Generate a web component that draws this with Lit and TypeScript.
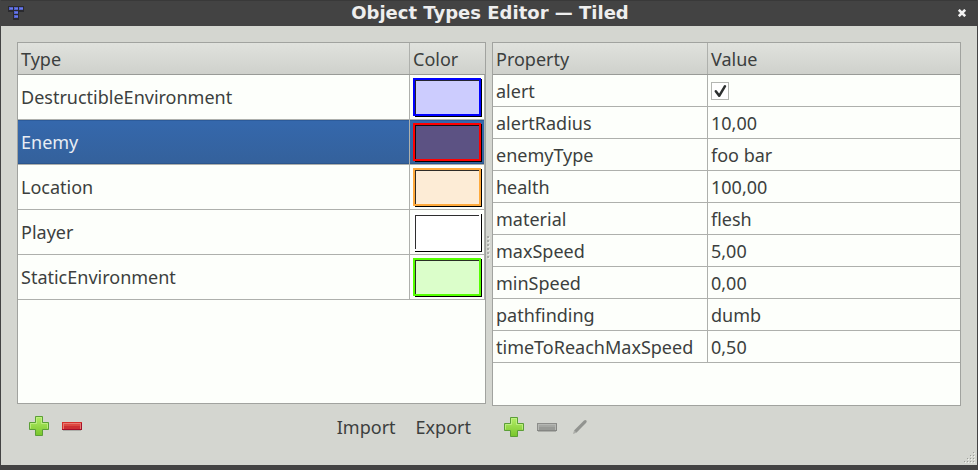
import { LitElement, html, svg, css } from "lit";
import { customElement } from "lit/decorators.js";
import { classMap } from "lit/directives/class-map.js";

const types = [
  { name: "DestructibleEnvironment", stroke: "#0000ff", fill: "#ccccfe" },
  { name: "Enemy", stroke: "#ff0000", fill: "#5c5283", selected: true },
  { name: "Location", stroke: "#ffaa3c", fill: "#fdecd6" },
  { name: "Player", stroke: "#ffffff", fill: "#ffffff" },
  { name: "StaticEnvironment", stroke: "#55ff00", fill: "#dbfeca" },
];

const properties: [string, string | boolean][] = [
  ["alert", true],
  ["alertRadius", "10,00"],
  ["enemyType", "foo bar"],
  ["health", "100,00"],
  ["material", "flesh"],
  ["maxSpeed", "5,00"],
  ["minSpeed", "0,00"],
  ["pathfinding", "dumb"],
  ["timeToReachMaxSpeed", "0,50"],
];

const swatch = (stroke: string, fill: string) => html`
  <svg class="swatch" width="70" height="40" viewBox="0 0 70 40" shape-rendering="crispEdges">
    <rect x="2" y="2" width="65" height="35" fill=${fill} />
    <path d="M68 1h1v38h-67v-1h66z" fill="#000" />
    <rect x="1" y="1" width="66" height="36" fill="none" stroke=${stroke} stroke-width="2" />
    <path d="M2 2h64v1h-63v33h-1z" fill="#000" fill-opacity=".82" />
  </svg>
`;

const plus = html`
  <svg width="20" height="20" viewBox="0 0 20 20">
    <defs>
      <linearGradient id="g" x2="0" y2="1">
        <stop offset="0" stop-color="#b4ee68" />
        <stop offset="1" stop-color="#78c52b" />
      </linearGradient>
    </defs>
    <path d="M6.5.5h7v6h6v7h-6v6h-7v-6h-6v-7h6z" fill="url(#g)" stroke="#5b9f37" />
    <path d="M7.5 7.5v-6h5v6h6v5M1.5 12.5v-5h6" fill="none" stroke="#c5f18d" stroke-opacity=".75" />
  </svg>
`;

const minus = (enabled: boolean) => html`
  <svg width="20" height="10" viewBox="0 0 20 10" shape-rendering="crispEdges">
    <rect x="1" y="8" width="18" height="1" fill="#000" opacity=".18" />
    <rect width="20" height="8" fill=${enabled ? "#a40f2a" : "#858683"} />
    <path d="M0 0h20v1h-19v6h-1z" fill=${enabled ? "#d4302b" : "#8c8d8a"} />
    <rect x="1" y="1" width="18" height="6" fill=${enabled ? "#e87870" : "#b6b8b4"} />
    <rect x="2" y="2" width="16" height="3" fill=${enabled ? "#dc4942" : "#a5a7a3"} />
    <rect x="2" y="4" width="16" height="3" fill=${enabled ? "#cc2f33" : "#989a96"} />
  </svg>
`;

@customElement("app-root")
export class AppRoot extends LitElement {
  static styles = css`
    :host {
      display: flex;
      flex-direction: column;
      box-sizing: border-box;
      width: 978px;
      height: 470px;
      overflow: hidden;
      background: #d4d6d0;
      border: solid #434343;
      border-width: 0 1px 5px;
      color: #3c3f3e;
      font: 18px/24px "Noto Sans", sans-serif;
      position: relative;
    }
    svg { display: block; flex: none; }
    .title {
      height: 26px;
      flex: none;
      display: grid;
      grid-template-columns: 41px 1fr 39px;
      align-items: center;
      background: #434343;
      box-shadow: inset 0 1px #393939;
      color: #eee;
      font: bold 18px/24px "DejaVu Sans", sans-serif;
      text-align: center;
    }
    .logo { margin-left: 7px; }
    .close { justify-self: end; margin-right: 10px; }
    .content { display: flex; padding: 16px 16px 0; }
    .column { width: 469px; flex: none; }
    .splitter {
      box-sizing: border-box;
      width: 6px;
      flex: none;
      padding: 194px 0 0 1px;
    }
    .table {
      box-sizing: border-box;
      border: 1px solid #a1a39f;
      background: #fdfffb;
    }
    .left .table { height: 362px; }
    .right .table { height: 364px; }
    .row { display: grid; border-bottom: 1px solid #aeb0ac; }
    .left .row { grid-template-columns: 392px 75px; height: 44px; }
    .right .row { grid-template-columns: 215px 1fr; height: 31px; }
    .table .row.header {
      height: 31px;
      background: linear-gradient(#e0e2dd, #cfd1cc);
      border-color: #999b97;
    }
    .cell {
      box-sizing: border-box;
      display: flex;
      align-items: center;
      padding-left: 3px;
      padding-top: 1px;
      white-space: pre;
    }
    .cell:first-child { border-right: 1px solid #aeb0ac; }
    .left .body .cell:last-child { border-right: 1px solid #aeb0ac; }
    .left .body .name { padding: 0 0 1px 3px; }
    .cell.color { padding: 3px 0 0 3px; align-items: flex-start; }
    .header .cell { padding-top: 0; }
    .selected .cell {
      background: linear-gradient(#3568ad, #34619b);
      box-shadow: inset 0 1px #2c5b9b, inset 0 -1px #2c568d;
      color: #e8edf4;
    }
    .check {
      box-sizing: border-box;
      width: 18px;
      height: 18px;
      border: 1px solid #b4b6b2;
      background: #fff;
    }
    .tools { display: flex; align-items: center; height: 40px; }
    .left .tools { padding: 2px 15px 0 12px; }
    .right .tools { padding: 1px 0 0 12px; }
    .tools .second { margin: 2px 0 0 13px; }
    .import { margin-left: auto; }
    .import, .export { margin-top: 1px; }
    .export { margin-left: 20px; }
    .pencil { margin-left: 14px; }
    .grip { position: absolute; right: 1px; bottom: 1px; }
  `;

  render() {
    return html`
      <header class="title">
        <svg class="logo" width="16" height="15" viewBox="0 0 16 15" shape-rendering="crispEdges">
          <path d="M0 0h16v6h-5v8h-6v-8h-5z" fill="#2a2a2e" />
          <path d="M1 1h4v3h-4zM6 1h4v3h-4zM11 1h4v3h-4zM6 5h4v3h-4zM6 9h4v3h-4z" fill="#5261c9" />
          <path d="M2 2h3v1h-3zM7 2h3v1h-3zM12 2h3v1h-3zM7 6h3v1h-3zM7 10h3v1h-3z" fill="#6b7aec" />
        </svg>
        <span>Object Types Editor — Tiled</span>
        <svg class="close" width="10" height="8" viewBox="0 0 10 8">
          <path d="M1.8 .8l6.4 6.4M8.2 .8l-6.4 6.4" stroke="#f2f2f2" stroke-width="2.6" />
        </svg>
      </header>
      <main class="content">
        <section class="column left">
          <div class="table">
            <div class="row header"><div class="cell">Type</div><div class="cell">Color</div></div>
            ${types.map((t) => html`
              <div class=${classMap({ row: true, body: true, selected: !!t.selected })}>
                <div class="cell name">${t.name}</div>
                <div class="cell color">${swatch(t.stroke, t.fill)}</div>
              </div>`)}
          </div>
          <div class="tools">
            ${plus}<span class="second">${minus(true)}</span>
            <span class="import">Import</span><span class="export">Export</span>
          </div>
        </section>
        <div class="splitter">
          <svg width="3" height="24" viewBox="0 0 3 24" shape-rendering="crispEdges">
            ${[0, 4, 8, 12, 16, 20].map((y) => svg`
              <rect x="1" y=${y + 1} width="2" height="2" fill="#e8eae5" />
              <rect x="0" y=${y} width="2" height="2" fill="#a9aba7" />`)}
          </svg>
        </div>
        <section class="column right">
          <div class="table">
            <div class="row header"><div class="cell">Property</div><div class="cell">Value</div></div>
            ${properties.map(([name, value]) => html`
              <div class="row body">
                <div class="cell">${name}</div>
                <div class="cell">${value === true
                  ? html`<span class="check"><svg width="16" height="16" viewBox="0 0 16 16">
                      <path d="M3.8 8.2L7.2 12.8L13 3.2" fill="none" stroke="#2d3030" stroke-width="2.5" stroke-linejoin="round" stroke-linecap="round" />
                    </svg></span>`
                  : value}</div>
              </div>`)}
          </div>
          <div class="tools">
            ${plus}<span class="second">${minus(false)}</span>
            <svg class="pencil" width="20" height="20" viewBox="0 0 20 20">
              <path d="M3 13.6L13 3.6Q14.4 2.6 15.4 3.6Q16.2 4.6 15.2 5.8L5.4 15.8Z" fill="#929490" />
              <path d="M3 13.6L5.4 15.8L2 17Z" fill="#aaaca7" />
            </svg>
          </div>
        </section>
      </main>
      <svg class="grip" width="12" height="12" viewBox="0 0 12 12" shape-rendering="crispEdges">
        ${[0, 1, 2, 3].map((r) => Array.from({ length: r + 1 }, (_, i) => svg`
          <rect x=${10 - i * 3} y=${r * 3 + 1} width="1" height="1" fill="#f2f4ef" />
          <rect x=${9 - i * 3} y=${r * 3} width="1" height="1" fill="#9c9e99" />`))}
      </svg>
    `;
  }
}
